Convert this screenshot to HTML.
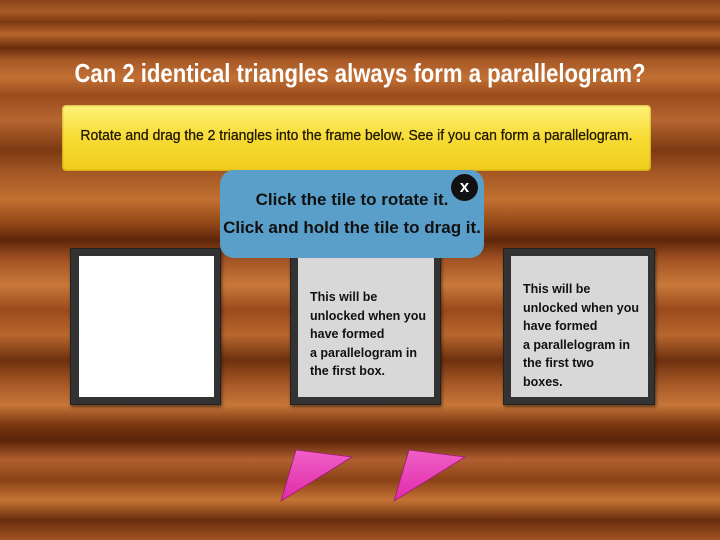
<!DOCTYPE html>
<html><head><meta charset="utf-8"><style>
*{margin:0;padding:0;box-sizing:border-box}
body{width:720px;height:540px;overflow:hidden;position:relative;font-family:"Liberation Sans",sans-serif;
background:linear-gradient(180deg,#8a4418 0px,#a85a24 12px,#7a3812 22px,#b8652c 34px,#6a2c0c 48px,#a65826 60px,#c27034 78px,#9a4c1c 95px,#b66630 120px,#7c3a12 150px,#a85a26 175px,#c0702f 200px,#8e4416 225px,#5e260a 240px,#a45424 260px,#c8793a 285px,#9a4a1c 310px,#b8672e 335px,#6e300e 360px,#a85a28 385px,#c67638 405px,#7a3610 425px,#5a2408 440px,#b06030 460px,#8a4216 480px,#c47434 500px,#6a2c0c 520px,#a25424 540px);}
.t{position:absolute;color:#fff;font-size:26px;font-weight:bold;left:0;width:720px;text-align:center;top:58px;white-space:nowrap;transform:scaleX(0.85)}
.y{position:absolute;left:62px;top:105px;width:589px;height:66px;border-radius:4px;background:linear-gradient(180deg,#fff27a,#f7dc34 50%,#f0cc1c);box-shadow:0 0 2px #a07000 inset}
.y div{position:absolute;left:-60px;right:-60px;top:0;text-align:center;line-height:62px;font-size:15px;color:#221800;white-space:nowrap;transform:scaleX(0.93);-webkit-text-stroke:0.3px #221800}
.f{position:absolute;background:#333;border:1px solid #222;box-shadow:1px 2px 3px rgba(0,0,0,.5)}
.in{position:absolute;left:7px;top:7px;right:6px;bottom:7px;background:#d8d8d8;font-size:12.5px;font-weight:bold;color:#111;line-height:18.5px;padding:21px 0 0 12px}
.p{position:absolute;left:220px;top:170px;width:264px;height:88px;background:#5a9fca;border-radius:14px;text-align:center;font-size:17px;font-weight:bold;color:#111;line-height:28px;padding-top:16px}
.x{position:absolute;left:451px;top:174px;width:27px;height:27px;border-radius:50%;background:#111;color:#fff;font-size:17px;font-weight:bold;text-align:center;line-height:26px}
</style></head><body>
<div class="t">Can 2 identical triangles always form a parallelogram?</div>
<div class="y"><div>Rotate and drag the 2 triangles into the frame below. See if you can form a parallelogram.</div></div>
<div class="f" style="left:70px;top:248px;width:151px;height:157px"><div class="in" style="background:#fff;left:8px"></div></div>
<div class="f" style="left:290px;top:250px;width:151px;height:155px"><div class="in" style="padding-top:30px">This will be<br>unlocked when you<br>have formed<br>a parallelogram in<br>the first box.</div></div>
<div class="f" style="left:503px;top:248px;width:152px;height:157px"><div class="in" style="padding-top:24px">This will be<br>unlocked when you<br>have formed<br>a parallelogram in<br>the first two<br>boxes.</div></div>
<div class="p">Click the tile to rotate it.<br>Click and hold the tile to drag it.</div>
<div class="x">x</div>
<svg style="position:absolute;left:0;top:0" width="720" height="540">
<defs><linearGradient id="g" x1="0" y1="0" x2="0" y2="1"><stop offset="0" stop-color="#f060c8"/><stop offset="1" stop-color="#e02aa8"/></linearGradient></defs>
<polygon points="296,450 352,457 281,501" fill="url(#g)" stroke="#a01878" stroke-width="0.8"/>
<polygon points="409,450 465,457 394,501" fill="url(#g)" stroke="#a01878" stroke-width="0.8"/>
</svg>
</body></html>
